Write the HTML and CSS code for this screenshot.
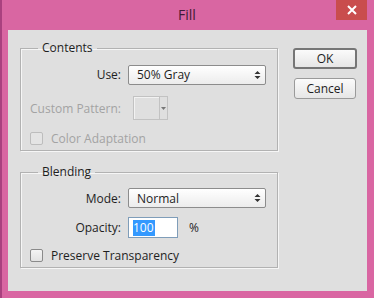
FILE: index.html
```html
<!DOCTYPE html>
<html lang="en">
<head>
  <meta charset="UTF-8" />
  <title>Fill</title>
  <link rel="stylesheet" href="styles.css">
</head>
<body>
  <div class="window">
    <div class="titlebar">
      <span></span>
      <h1 class="title">Fill</h1>
      <button class="close">
        <svg width="10" height="10" viewBox="0 0 10 10"><path d="M1 1 L9 9 M9 1 L1 9" stroke="#fff" stroke-width="2"/></svg>
      </button>
    </div>

    <div class="dialog">
      <div class="groups">
        <fieldset class="group contents">
          <legend>Contents</legend>
          <div class="row use-row">
            <label>Use:</label>
            <div class="select">50% Gray
              <svg class="spin" width="7" height="10" viewBox="0 0 7 10"><path d="M0.5 4 L3.5 1 L6.5 4 Z M0.5 6 L3.5 9 L6.5 6 Z" fill="#333"/></svg>
            </div>
          </div>
          <div class="row pattern-row disabled">
            <label>Custom Pattern:</label>
            <div class="swatch">
              <span class="swatch-well"></span>
              <span class="swatch-drop">
                <svg width="5" height="3" viewBox="0 0 5 3"><path d="M0 0 L5 0 L2.5 3 Z" fill="#777"/></svg>
              </span>
            </div>
          </div>
          <div class="check disabled">
            <span class="box"></span>Color Adaptation
          </div>
        </fieldset>

        <fieldset class="group blending">
          <legend>Blending</legend>
          <div class="row mode-row">
            <label>Mode:</label>
            <div class="select">Normal
              <svg class="spin" width="7" height="10" viewBox="0 0 7 10"><path d="M0.5 4 L3.5 1 L6.5 4 Z M0.5 6 L3.5 9 L6.5 6 Z" fill="#333"/></svg>
            </div>
          </div>
          <div class="row opacity-row">
            <label>Opacity:</label>
            <div class="field"><span class="selected">100</span></div>
            <span class="unit">%</span>
          </div>
          <div class="check">
            <span class="box"></span>Preserve Transparency
          </div>
        </fieldset>
      </div>

      <div class="buttons">
        <button class="btn default">OK</button>
        <button class="btn">Cancel</button>
      </div>
    </div>
  </div>
</body>
</html>
```

FILE: styles.css
```css
body {
  margin: 0;
  font-family: "Open Sans", Arial, sans-serif;
  font-size: 12px;
  color: #1e1e1e;
}

.window {
  width: 374px;
  height: 298px;
  background: #d966a2;
  box-shadow: inset 2px 0 0 #a9417f;
  overflow: hidden;
}

.titlebar {
  height: 30px;
  display: grid;
  grid-template-columns: 1fr auto 1fr;
}

.title {
  margin: 0;
  font-size: 14px;
  font-weight: normal;
  line-height: 30px;
  color: #3d1b36;
}

.close {
  justify-self: end;
  width: 31px;
  height: 20px;
  margin-right: 7px;
  padding: 0;
  border: none;
  background: #c94d4d;
  display: flex;
  align-items: center;
  justify-content: center;
}

.dialog {
  height: 261px;
  margin: 0 7px 0 8px;
  background: #dfdfdf;
  display: flex;
  padding-top: 10px;
  box-sizing: border-box;
}

.groups {
  margin-left: 12px;
  width: 258px;
}

.group {
  margin: 0;
  padding: 8px 0 4px 0;
  border: 1px solid #b2b2b2;
  box-shadow: 1px 1px 0 #f6f6f6, inset 1px 1px 0 #f6f6f6;
  min-width: 0;
}

.group legend {
  margin-left: 17px;
  padding: 0 4px;
  line-height: 16px;
}

.blending {
  margin-top: 13px;
}

.row {
  display: flex;
  align-items: center;
  gap: 7px;
}

.row label {
  width: 100px;
  text-align: right;
}

.disabled {
  color: #a3a3a3;
}

.select {
  box-sizing: border-box;
  width: 138px;
  height: 20px;
  padding-left: 8px;
  border: 1px solid #8c8c8c;
  border-radius: 2px;
  background: linear-gradient(#ffffff, #ececec);
  display: flex;
  align-items: center;
  justify-content: space-between;
}

.spin {
  margin-right: 4px;
}

.use-row {
  height: 21px;
}

.pattern-row {
  height: 24px;
  margin-top: 11px;
}

.swatch {
  width: 33px;
  height: 22px;
  border: 1px solid #c2c2c2;
  margin-left: 5px;
  display: flex;
}

.swatch-well {
  flex: 1;
  box-shadow: inset 1px 1px 0 #f2f2f2;
}

.swatch-drop {
  width: 7px;
  border-left: 1px solid #c2c2c2;
  display: flex;
  align-items: center;
  justify-content: center;
}

.check {
  display: flex;
  align-items: center;
  gap: 8px;
  height: 16px;
  margin-left: 9px;
  margin-top: 10px;
}

.box {
  width: 11px;
  height: 11px;
  border: 1px solid #8a8a8a;
  border-radius: 2px;
  background: linear-gradient(#f4f4f4, #e2e2e2);
}

.check.disabled .box {
  border-color: #bdbdbd;
  background: #e4e4e4;
}

.mode-row {
  height: 20px;
}

.opacity-row {
  height: 21px;
  margin-top: 9px;
}

.field {
  width: 44px;
  height: 19px;
  padding-left: 4px;
  border: 1px solid #7f9db9;
  background: #fff;
  display: flex;
  align-items: center;
}

.selected {
  background: #3399ff;
  color: #fff;
  line-height: 16px;
  padding-right: 1px;
}

.unit {
  margin-left: 4px;
}

.blending .check {
  margin-top: 9px;
}

.buttons {
  margin-left: 15px;
  margin-top: 8px;
  display: flex;
  flex-direction: column;
  align-items: center;
  gap: 9px;
  width: 64px;
}

.btn {
  width: 62px;
  height: 21px;
  padding: 0;
  font-family: "Open Sans", Arial, sans-serif;
  font-size: 12px;
  color: #1e1e1e;
  border: 1px solid #9a9a9a;
  border-radius: 3px;
  background: linear-gradient(#fbfbfb, #e6e6e6);
}

.btn.default {
  width: 64px;
  border: 2px solid #767676;
}
```
